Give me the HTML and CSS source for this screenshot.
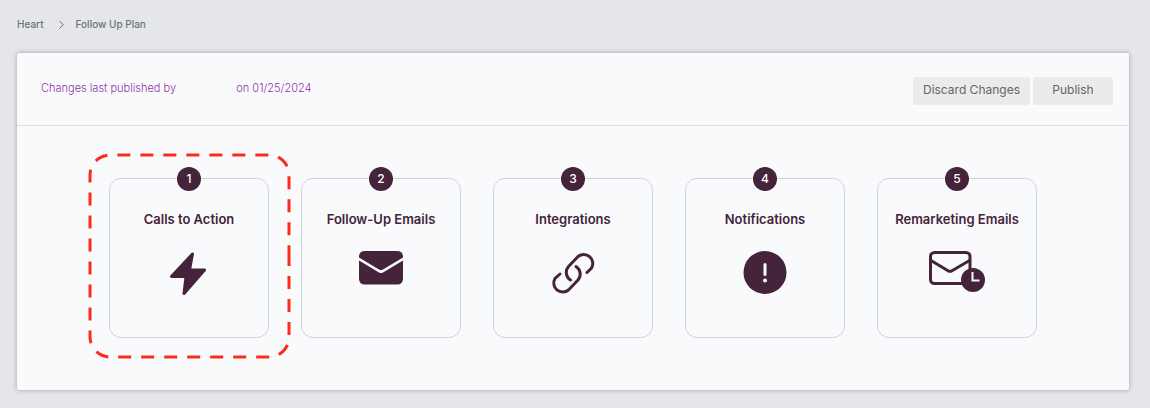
FILE: index.html
```html
<!DOCTYPE html>
<html lang="en">
<head>
    <meta charset="UTF-8">
    <meta name="viewport" content="width=device-width, initial-scale=1.0">
    <title>Follow Up Plan</title>
    <link rel="stylesheet" href="styles.css">
</head>
<body>
    <nav class="breadcrumb" aria-label="Breadcrumb">
        <a href="#">Heart</a>
        <svg class="chevron" viewBox="0 0 8 10" aria-hidden="true"><path d="M3.500 2 7.300 5.800 3.500 9.500"/></svg>
        <a href="#">Follow Up Plan</a>
    </nav>

    <main class="panel">
        <header class="panel-header">
            <p class="published">Changes last published by <span class="publisher"></span> on 01/25/2024</p>
            <div class="actions">
                <button type="button" class="btn">Discard Changes</button>
                <button type="button" class="btn">Publish</button>
            </div>
        </header>

        <div class="steps">
            <a href="#" class="step">
                <svg class="highlight" viewBox="0 0 203 206" aria-hidden="true">
                    <path d="M201 100V184A20 20 0 0 1 181 204H22A20 20 0 0 1 2 184V22A20 20 0 0 1 22 2H181A20 20 0 0 1 201 22Z"/>
                </svg>
                <span class="number">1</span>
                <h2>Calls to Action</h2>
                <svg class="icon" viewBox="0 0 60 48" aria-hidden="true">
                    <path class="fill round" d="M33.500 5 12.500 27.500H27L25 44.500 45.500 21H30.500Z"/>
                </svg>
            </a>
            <a href="#" class="step">
                <span class="number">2</span>
                <h2>Follow-Up Emails</h2>
                <svg class="icon" viewBox="0 0 60 48" aria-hidden="true">
                    <path class="fill" d="M14 2H46Q52 2 52 8V8.500L32 20.500Q30 21.500 28 20.500L8 8.500V8Q8 2 14 2ZM8 11.500 28 23.500Q30 24.500 32 23.500L52 11.500V29.500Q52 35.500 46 35.500H14Q8 35.500 8 29.500Z"/>
                </svg>
            </a>
            <a href="#" class="step">
                <span class="number">3</span>
                <h2>Integrations</h2>
                <svg class="icon" viewBox="0 0 60 48" aria-hidden="true">
                    <path class="line" d="M27.500 31A9 9 0 0 1 25.500 17.500L35 7.500A9 9 0 0 1 48.500 19L44 23.500"/>
                    <path class="line" d="M33 17.500A9 9 0 0 1 35 31L25.500 41A9 9 0 0 1 12 29.500L17 25"/>
                </svg>
            </a>
            <a href="#" class="step">
                <span class="number">4</span>
                <h2>Notifications</h2>
                <svg class="icon" viewBox="0 0 60 48" aria-hidden="true">
                    <circle class="fill" cx="30" cy="23.500" r="21.500"/>
                    <path class="mark" d="M30 15.500V25.500"/>
                    <circle class="dot" cx="30" cy="31.500" r="2"/>
                </svg>
            </a>
            <a href="#" class="step">
                <span class="number">5</span>
                <h2>Remarketing Emails</h2>
                <svg class="icon" viewBox="0 0 60 48" aria-hidden="true">
                    <rect class="line" x="3.500" y="3.500" width="39.500" height="31" rx="4"/>
                    <path class="line" d="M4 11.500 21 21.700Q23 23 25 21.700L42.500 11.500"/>
                    <circle class="fill" cx="46" cy="31" r="12"/>
                    <path class="hands" d="M45.500 23V31.500H52.500"/>
                </svg>
            </a>
        </div>
    </main>
</body>
</html>
```
FILE: styles.css
```css
* {
    box-sizing: border-box;
}
body {
    margin: 0;
    padding: 16px 21px 18px 17px;
    background: #e5e6ea;
    font-family: Inter, "Liberation Sans", sans-serif;
    color: #44233b;
}
a {
    color: inherit;
    text-decoration: none;
}
.breadcrumb {
    display: flex;
    align-items: center;
    gap: 12px;
    height: 16px;
    margin-bottom: 21px;
    font-size: 10px;
    font-weight: 500;
    color: #6b7280;
}
.chevron {
    width: 8px;
    height: 10px;
    fill: none;
    stroke: #6b7280;
}
.panel {
    background: #f9fafc;
    border-radius: 2px;
    box-shadow: 0 0 5px rgba(0, 0, 0, 0.3);
}
.panel-header {
    display: flex;
    justify-content: space-between;
    padding: 24px 16px 20px 24px;
    border-bottom: 1px solid #dcdee2;
}
.published {
    margin: 0;
    font-size: 11px;
    font-weight: 300;
    line-height: 22px;
    color: #9333a8;
}
.publisher {
    display: inline-block;
    width: 54px;
}
.actions {
    display: flex;
    gap: 3px;
}
.btn {
    min-width: 80px;
    height: 28px;
    padding: 0 10px 3px;
    border: 0;
    border-radius: 3px;
    background: #ebebeb;
    font-family: inherit;
    font-size: 12px;
    color: #666;
    cursor: pointer;
}
.steps {
    display: flex;
    flex-wrap: wrap;
    gap: 32px;
    padding: 52px 92px;
}
.step {
    position: relative;
    display: flex;
    flex-direction: column;
    align-items: center;
    width: 160px;
    height: 160px;
    border: 1px solid #d1d3db;
    border-radius: 12px;
}
.step h2 {
    margin: 18px 0 20px;
    font-size: 13px;
    font-weight: 600;
    line-height: 20px;
    white-space: nowrap;
}
.number {
    width: 24px;
    height: 24px;
    margin-top: -12px;
    border-radius: 50%;
    background: #44233b;
    color: #fff;
    font-size: 12px;
    font-weight: 500;
    line-height: 24px;
    text-align: center;
}
.icon {
    width: 60px;
    height: 48px;
}
.fill {
    fill: #44233b;
}
.round {
    stroke: #44233b;
    stroke-width: 3;
    stroke-linejoin: round;
}
.line {
    fill: none;
    stroke: #44233b;
    stroke-width: 3;
    stroke-linecap: round;
}
.mark {
    stroke: #f9fafc;
    stroke-width: 3;
    stroke-linecap: round;
}
.dot {
    fill: #f9fafc;
}
.hands {
    fill: none;
    stroke: #f9fafc;
    stroke-width: 2;
}
.highlight {
    position: absolute;
    top: -26px;
    left: -22px;
    width: 203px;
    height: 206px;
    fill: none;
    stroke: #fb2c1c;
    stroke-width: 3;
    stroke-dasharray: 13 10;
    pointer-events: none;
}
```
